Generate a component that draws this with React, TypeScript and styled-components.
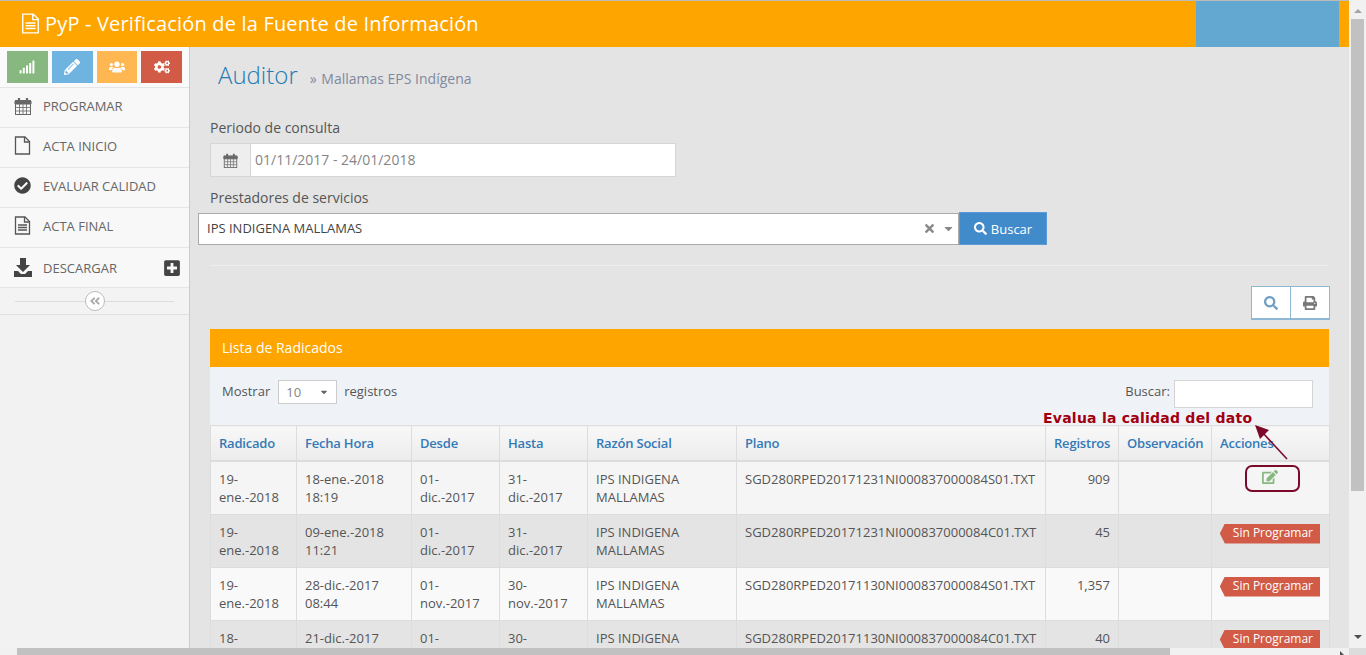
import styled, { createGlobalStyle } from "styled-components";
import {
  FaCaretDown,
  FaCheckCircle,
  FaCogs,
  FaAngleDoubleLeft,
  FaEdit,
  FaPencilAlt,
  FaPlusSquare,
  FaPrint,
  FaSearch,
  FaSignal,
  FaTimes,
  FaUsers,
} from "react-icons/fa";

const GlobalStyle = createGlobalStyle`
  * { box-sizing: border-box; }
  html, body { margin: 0; height: 100%; overflow: hidden; }
  body { font-family: "Open Sans", sans-serif; font-size: 13px; color: #393939; }
`;

const Page = styled.div`
  height: 655px;
  display: grid;
  grid-template-columns: 1fr 17px;
  grid-template-rows: 648px 7px;
  overflow: hidden;
`;

const Viewport = styled.div`
  display: flex;
  flex-direction: column;
  overflow: hidden;
  background: #e4e4e4;
`;

const TopBar = styled.header`
  flex: none;
  height: 47px;
  border-top: 1px solid #bbb;
  background: #ffa500;
  display: flex;
  align-items: center;
  justify-content: space-between;
  padding-left: 21px;
  color: #fff;
`;

const Brand = styled.div`
  display: flex;
  align-items: center;
  gap: 5px;
  margin-top: -2px;
  font-size: 20px;
  letter-spacing: 0.18px;
`;

const UserBox = styled.div`
  width: 143px;
  height: 46px;
  margin-right: 10px;
  background: #62a8d1;
`;

const Body = styled.div`
  flex: 1;
  display: flex;
  min-height: 0;
`;

const Sidebar = styled.aside`
  flex: none;
  width: 190px;
  background: #f2f2f2;
  border-right: 1px solid #ccc;
`;

const Shortcuts = styled.div`
  height: 41px;
  padding: 4px 7px 0;
  display: flex;
  gap: 4px;
  background: #fafafa;
  border-bottom: 1px solid #e5e5e5;
`;

const Shortcut = styled.div<{ $color: string }>`
  width: 41px;
  height: 32px;
  background: ${(p) => p.$color};
  color: #fff;
  display: flex;
  align-items: center;
  justify-content: center;
  font-size: 16px;
`;

const NavItem = styled.div<{ $drop?: boolean }>`
  height: 40px;
  display: flex;
  align-items: center;
  padding: ${(p) => (p.$drop ? "0 8px 0 14px" : "0 8px 4px 14px")};
  background: #f8f8f8;
  border-bottom: 1px solid #e5e5e5;
  color: #666;
  font-size: 13px;
`;

const NavIcon = styled.span`
  width: 29px;
  flex: none;
  display: flex;
  align-items: center;
  font-size: 17px;
  color: #444;
`;

const NavLabel = styled.span`
  flex: 1;
`;

const Collapse = styled.div`
  height: 27px;
  display: flex;
  align-items: center;
  justify-content: center;
  padding: 0 15px;
  border-bottom: 1px solid #e0e0e0;
  background: #f3f3f3;
`;

const CollapseLine = styled.span`
  flex: 1;
  height: 1px;
  background: #ddd;
`;

const CollapseButton = styled.span`
  width: 20px;
  height: 20px;
  border-radius: 50%;
  border: 1px solid #bbb;
  background: #fff;
  color: #aaa;
  display: flex;
  align-items: center;
  justify-content: center;
  font-size: 12px;
`;

const Main = styled.main`
  flex: 1;
  min-width: 0;
  padding: 0 20px;
`;

const PageTitle = styled.div`
  height: 57px;
  padding: 11px 0 0 8px;
  display: flex;
  align-items: baseline;
  gap: 12px;
`;

const Title = styled.h1`
  margin: 0;
  font-size: 24px;
  font-weight: 300;
  color: #2679b5;
`;

const Subtitle = styled.small`
  font-size: 14px;
  color: #8089a0;
`;

const Chevrons = styled.span`
  margin-right: 1px;
`;

const FieldLabel = styled.div<{ $tight?: boolean }>`
  font-size: 14px;
  line-height: 20px;
  color: #555;
  margin-top: ${(p) => (p.$tight ? "11px" : "14px")};
  height: ${(p) => (p.$tight ? "24px" : "25px")};
`;

const DateGroup = styled.div`
  width: 466px;
  height: 34px;
  display: flex;
  border: 1px solid #d5d5d5;
  background: #fff;
`;

const Addon = styled.span`
  width: 40px;
  flex: none;
  background: #eee;
  border-right: 1px solid #d5d5d5;
  display: flex;
  align-items: center;
  justify-content: center;
  color: #666;
`;

const DateValue = styled.span`
  padding-left: 4px;
  font-size: 14px;
  line-height: 32px;
  color: #858585;
`;

const ProviderRow = styled.div`
  margin-left: -12px;
  display: flex;
  width: 849px;
  height: 33px;
`;

const ProviderSelect = styled.div`
  flex: 1;
  margin-top: 1px;
  height: 32px;
  border: 1px solid #aaa;
  background: #fff;
  padding: 0 3px 2px 8px;
  display: flex;
  align-items: center;
  gap: 6px;
  color: #444;
`;

const ProviderName = styled.span`
  flex: 1;
`;

const SelectGlyph = styled.span`
  display: flex;
  color: #888;
  font-size: 13px;
`;

const SearchButton = styled.button`
  width: 88px;
  border: 1px solid #5b9bd5;
  background: #428bca;
  color: #fff;
  font: inherit;
  font-size: 13px;
  display: flex;
  align-items: center;
  justify-content: center;
  gap: 4px;
  padding: 0;
`;

const Divider = styled.hr`
  margin: 20px 0 0;
  border: 0;
  border-top: 1px solid #eee;
`;

const Tools = styled.div`
  height: 63px;
  padding-top: 20px;
  display: flex;
  justify-content: flex-end;
  margin-right: -1px;
`;

const ToolButton = styled.button`
  width: 40px;
  height: 34px;
  margin-left: -1px;
  border: 1px solid #8fb8d5;
  border-bottom-width: 2px;
  background: #fff;
  font-size: 14px;
  color: ${(p) => p.color};
  display: flex;
  align-items: center;
  justify-content: center;
  padding: 0;
`;

const Panel = styled.section`
  position: relative;
`;

const PanelHeader = styled.div`
  height: 38px;
  background: #ffa500;
  color: #fff;
  font-size: 14px;
  line-height: 38px;
  padding-left: 12px;
`;

const FilterBar = styled.div`
  height: 58px;
  background: #eff3f8;
  padding: 13px 16px 0 12px;
  display: flex;
  justify-content: space-between;
  align-items: flex-start;
`;

const FilterGroup = styled.label<{ $gap: number }>`
  display: flex;
  align-items: flex-start;
  gap: ${(p) => p.$gap}px;
  line-height: 22px;
  color: #555;
`;

const PageSize = styled.span`
  width: 59px;
  height: 24px;
  margin-right: -1px;
  border: 1px solid #ccc;
  background: #fff;
  color: #858585;
  padding: 0 7px;
  display: flex;
  align-items: center;
  justify-content: space-between;
  font-size: 13px;
`;

const PageSizeCaret = styled.span`
  display: flex;
  font-size: 10px;
  color: #666;
`;

const FilterInput = styled.span`
  width: 139px;
  height: 28px;
  border: 1px solid #d5d5d5;
  background: #fff;
`;

const Table = styled.table`
  width: 1119px;
  table-layout: fixed;
  border-collapse: collapse;
  border: 1px solid #ddd;
`;

const Th = styled.th`
  height: 35px;
  padding: 0 8px;
  text-align: left;
  font-weight: 600;
  font-size: 13px;
  letter-spacing: -0.2px;
  color: #337ab7;
  border: 1px solid #ddd;
  border-bottom: 2px solid #ddd;
  background: linear-gradient(#f8f8f8, #ececec);
`;

const Row = styled.tr<{ $bg: string }>`
  background: ${(p) => p.$bg};
`;

const Td = styled.td<{ $align?: string }>`
  height: 53px;
  padding: 8px 8px 8px;
  vertical-align: top;
  line-height: 18px;
  color: #555;
  border: 1px solid #ddd;
  text-align: ${(p) => p.$align || "left"};
`;

const EditLink = styled.span`
  display: block;
  text-align: center;
  margin: -1px 0 0 -2px;
  color: #87b87f;
  font-size: 16px;
  line-height: 17px;
`;

const Ribbon = styled.span`
  display: block;
  float: right;
  height: 20px;
  margin: 1px 1px 0 0;
  padding: 0 7px 0 13px;
  line-height: 18px;
  font-size: 12px;
  color: #fff;
  white-space: nowrap;
  background: #d15b47;
  clip-path: polygon(5px 0, 100% 0, 100% 100%, 5px 100%, 0 50%);
`;

/* the red marks somebody drew over the screenshot */
const Note = styled.span`
  position: absolute;
  left: 833px;
  top: 81px;
  font-family: "DejaVu Sans", sans-serif;
  font-weight: 700;
  font-size: 14px;
  letter-spacing: 0.24px;
  line-height: 17px;
  color: #a00010;
  white-space: nowrap;
`;

const NoteArrow = styled.svg`
  position: absolute;
  left: 1039px;
  top: 94px;
`;

const NoteFrame = styled.span`
  position: absolute;
  left: 1035px;
  top: 136px;
  width: 55px;
  height: 27px;
  border: 2px solid #7b0a2a;
  border-radius: 7px;
`;

const VScroll = styled.div`
  background: #f1f1f1;
  display: flex;
  flex-direction: column;
  align-items: center;
  padding-top: 9px;
`;

const ArrowUp = styled.span`
  width: 0;
  height: 0;
  border: 4px solid transparent;
  border-top: 0;
  border-bottom: 4px solid #a3a3a3;
`;

const ArrowDown = styled.span`
  width: 0;
  height: 0;
  margin-top: 144px;
  border: 4px solid transparent;
  border-bottom: 0;
  border-top: 4px solid #505050;
`;

const VThumb = styled.span`
  width: 13px;
  height: 472px;
  margin-top: 6px;
  background: #c1c1c1;
`;

const HScroll = styled.div`
  background: #f1f1f1;
  padding: 0 5px 0 17px;
  display: flex;
  justify-content: space-between;
`;

const HThumb = styled.span`
  width: 1153px;
  background: #c1c1c1;
`;

const ArrowRight = styled.span`
  width: 0;
  height: 0;
  margin-top: 3px;
  border: 4px solid transparent;
  border-right: 0;
  border-left: 4px solid #505050;
`;

const ScrollCorner = styled.div`
  background: #dcdcdc;
`;

const CalendarIcon = ({ size = 18 }: { size?: number }) => (
  <svg width={size} height={size} viewBox="0 0 18 18" fill="none" stroke="#666">
    <rect x="1.5" y="3.5" width="15" height="14" />
    <path d="M1 4h16v3H1z" fill="#666" />
    <path d="M1.5 10.5h15M1.5 14h15M5.5 7v10M9 7v10M12.5 7v10" strokeWidth="0.8" />
    <path d="M5 1v4M13 1v4" strokeWidth="2.2" />
  </svg>
);

const FileIcon = () => (
  <svg width="17" height="19" viewBox="0 0 17 19" fill="none" stroke="#555" strokeWidth="1.3">
    <path d="M1.5 1h9.5l4.5 4.5V18h-14z" />
    <path d="M10.5 1v5h5" />
  </svg>
);

const DocIcon = ({ width = 17, height = 19, color = "#555" }: { width?: number; height?: number; color?: string }) => (
  <svg width={width} height={height} viewBox="0 0 17 19" fill="none" stroke={color} strokeWidth="1.3">
    <path d="M1.5 1h9.5l4.5 4.5V18h-14z" />
    <path d="M10.5 1v5h5M4 9h9M4 11.5h9M4 14h9" />
  </svg>
);

const DownloadIcon = () => (
  <svg width="18" height="19" viewBox="0 0 18 19" fill="#444">
    <path d="M6 0h6v7h4l-7 7-7-7h4z" />
    <path d="M0 13h4l3 3h4l3-3h4v6H0z" />
  </svg>
);

const columns = [86, 115, 88, 88, 149, 309, 73, 93, 118];
const headers = ["Radicado", "Fecha Hora", "Desde", "Hasta", "Razón Social", "Plano", "Registros", "Observación", "Acciones"];

const rows = [
  { bg: "#f5f5f5", radicado: "19-ene.-2018", fecha: "18-ene.-2018 18:19", desde: "01-dic.-2017", hasta: "31-dic.-2017", plano: "SGD280RPED20171231NI000837000084S01.TXT", registros: "909" },
  { bg: "#e4e4e4", radicado: "19-ene.-2018", fecha: "09-ene.-2018 11:21", desde: "01-dic.-2017", hasta: "31-dic.-2017", plano: "SGD280RPED20171231NI000837000084C01.TXT", registros: "45" },
  { bg: "#f9f9f9", radicado: "19-ene.-2018", fecha: "28-dic.-2017 08:44", desde: "01-nov.-2017", hasta: "30-nov.-2017", plano: "SGD280RPED20171130NI000837000084S01.TXT", registros: "1,357" },
  { bg: "#e4e4e4", radicado: "18-ene.-2018", fecha: "21-dic.-2017 10:02", desde: "01-nov.-2017", hasta: "30-nov.-2017", plano: "SGD280RPED20171130NI000837000084C01.TXT", registros: "40" },
];

const nav = [
  { label: "PROGRAMAR", icon: <CalendarIcon /> },
  { label: "ACTA INICIO", icon: <FileIcon /> },
  { label: "EVALUAR CALIDAD", icon: <FaCheckCircle /> },
  { label: "ACTA FINAL", icon: <DocIcon /> },
  { label: "DESCARGAR", icon: <DownloadIcon /> },
];

export default function App() {
  return (
    <>
      <GlobalStyle />
      <Page>
        <Viewport>
          <TopBar>
            <Brand>
              <DocIcon width={19} height={21} color="#fff" />
              PyP - Verificación de la Fuente de Información
            </Brand>
            <UserBox />
          </TopBar>
          <Body>
            <Sidebar>
              <Shortcuts>
                <Shortcut $color="#87b87f"><FaSignal /></Shortcut>
                <Shortcut $color="#6fb3e0"><FaPencilAlt /></Shortcut>
                <Shortcut $color="#ffb752"><FaUsers /></Shortcut>
                <Shortcut $color="#d15b47"><FaCogs /></Shortcut>
              </Shortcuts>
              {nav.map((item) => (
                <NavItem key={item.label} $drop={item.label === "DESCARGAR"}>
                  <NavIcon>{item.icon}</NavIcon>
                  <NavLabel>{item.label}</NavLabel>
                  {item.label === "DESCARGAR" && <FaPlusSquare size={18} color="#444" />}
                </NavItem>
              ))}
              <Collapse>
                <CollapseLine />
                <CollapseButton><FaAngleDoubleLeft /></CollapseButton>
                <CollapseLine />
              </Collapse>
            </Sidebar>
            <Main>
              <PageTitle>
                <Title>Auditor</Title>
                <Subtitle><Chevrons>»</Chevrons> Mallamas EPS Indígena</Subtitle>
              </PageTitle>
              <FieldLabel>Periodo de consulta</FieldLabel>
              <DateGroup>
                <Addon><CalendarIcon size={15} /></Addon>
                <DateValue>01/11/2017 - 24/01/2018</DateValue>
              </DateGroup>
              <FieldLabel $tight>Prestadores de servicios</FieldLabel>
              <ProviderRow>
                <ProviderSelect>
                  <ProviderName>IPS INDIGENA MALLAMAS</ProviderName>
                  <SelectGlyph><FaTimes /></SelectGlyph>
                  <SelectGlyph><FaCaretDown /></SelectGlyph>
                </ProviderSelect>
                <SearchButton><FaSearch size={13} /> Buscar</SearchButton>
              </ProviderRow>
              <Divider />
              <Tools>
                <ToolButton color="#6f9fc4"><FaSearch /></ToolButton>
                <ToolButton color="#777"><FaPrint /></ToolButton>
              </Tools>
              <Panel>
                <PanelHeader>Lista de Radicados</PanelHeader>
                <FilterBar>
                  <FilterGroup $gap={8}>
                    Mostrar
                    <PageSize>10<PageSizeCaret><FaCaretDown /></PageSizeCaret></PageSize>
                    registros
                  </FilterGroup>
                  <FilterGroup $gap={4}>
                    <span>Buscar:</span>
                    <FilterInput />
                  </FilterGroup>
                </FilterBar>
                <Table>
                  <colgroup>
                    {columns.map((w, i) => <col key={i} width={w} />)}
                  </colgroup>
                  <thead>
                    <tr>{headers.map((h) => <Th key={h}>{h}</Th>)}</tr>
                  </thead>
                  <tbody>
                    {rows.map((r, i) => (
                      <Row key={r.plano} $bg={r.bg}>
                        <Td>{r.radicado}</Td>
                        <Td>{r.fecha}</Td>
                        <Td>{r.desde}</Td>
                        <Td>{r.hasta}</Td>
                        <Td>IPS INDIGENA MALLAMAS</Td>
                        <Td>{r.plano}</Td>
                        <Td $align="right">{r.registros}</Td>
                        <Td />
                        <Td>
                          {i === 0 ? <EditLink><FaEdit /></EditLink> : <Ribbon>Sin Programar</Ribbon>}
                        </Td>
                      </Row>
                    ))}
                  </tbody>
                </Table>
                <Note>Evalua la calidad del dato</Note>
                <NoteArrow width="40" height="40" viewBox="0 0 40 40">
                  <line x1="38" y1="36" x2="13" y2="9" stroke="#7b0a2a" strokeWidth="1.6" />
                  <polygon points="6,2 20,7 11,16" fill="#7b0a2a" />
                </NoteArrow>
                <NoteFrame />
              </Panel>
            </Main>
          </Body>
        </Viewport>
        <VScroll>
          <ArrowUp />
          <VThumb />
          <ArrowDown />
        </VScroll>
        <HScroll><HThumb /><ArrowRight /></HScroll>
        <ScrollCorner />
      </Page>
    </>
  );
}
